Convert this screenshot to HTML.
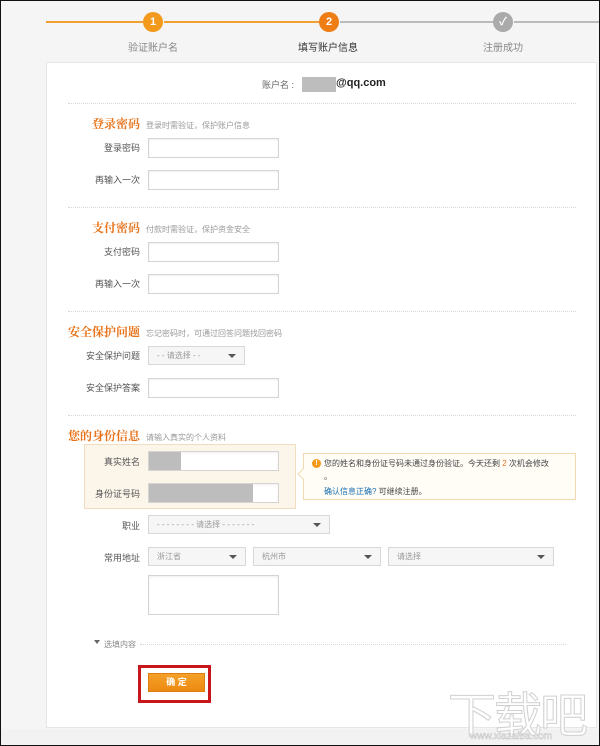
<!DOCTYPE html>
<html><head><meta charset="utf-8"><style>
*{margin:0;padding:0;box-sizing:border-box}
body{width:600px;height:746px;position:relative;overflow:hidden;background:#f5f5f5;font-family:"Liberation Sans","Noto Sans CJK SC",sans-serif;font-size:9px;color:#555}
.frame{position:absolute;left:0;top:0;width:600px;height:746px;border:1px solid #111;z-index:9;pointer-events:none}
.a{position:absolute;white-space:nowrap}
.line{position:absolute;height:2px;top:21px}
.circ{position:absolute;width:20px;height:20px;border-radius:50%;color:#fff;font-weight:bold;font-size:11px;text-align:center;line-height:20px;top:12px}
.card{position:absolute;left:46px;top:62px;width:551px;height:666px;background:#fff;border:1px solid #e6e6e6}
.dot{position:absolute;border-top:1px dotted #d8d8d8;height:0}
.h{position:absolute;color:#e8731a;font-weight:bold;font-size:12px;font-family:"Liberation Serif","Noto Serif CJK SC",serif;white-space:nowrap}
.sub{color:#999;font-size:8px;font-weight:normal;font-family:"Liberation Sans","Noto Sans CJK SC",sans-serif;margin-left:6px}
.lbl{position:absolute;width:80px;text-align:right;font-size:9px;color:#555}
.in{position:absolute;background:#fff;border:1px solid #d4d4d4;box-shadow:inset 0 1px 2px #eee}
.sel{position:absolute;background:#f6f6f6;border:1px solid #d8d8d8;font-size:8px;color:#999;padding-left:8px;line-height:17px}
.sel:after{content:"";position:absolute;right:8px;top:7px;border:4px solid transparent;border-top:4px solid #555}
.gray{position:absolute;background:#bdbdbd}
</style></head><body>
<div class="line" style="left:46px;width:97px;background:#f0a030"></div>
<div class="line" style="left:164px;width:155px;background:#f0a030"></div>
<div class="line" style="left:340px;width:153px;background:#bbb"></div>
<div class="line" style="left:514px;width:86px;background:#bbb"></div>
<div class="circ" style="left:143px;background:#f39a1c">1</div>
<div class="circ" style="left:319px;background:#ee7d14">2</div>
<div class="circ" style="left:493px;background:#aaa">✓</div>
<div class="a" style="left:128px;top:39px;color:#888;font-size:10px">验证账户名</div>
<div class="a" style="left:298px;top:39px;color:#333;font-size:10px">填写账户信息</div>
<div class="a" style="left:483px;top:39px;color:#888;font-size:10px">注册成功</div>

<div class="card"></div>
<div class="a" style="left:262px;top:78px;font-size:9px;color:#666">账户名 :</div>
<div class="gray" style="left:302px;top:77px;width:34px;height:15px"></div>
<div class="a" style="left:336px;top:77px;font-size:11px;font-weight:bold;color:#222">@qq.com</div>
<div class="dot" style="left:68px;top:103px;width:508px"></div>

<div class="h" style="left:92px;top:115px">登录密码<span class="sub">登录时需验证，保护账户信息</span></div>
<div class="lbl" style="left:60px;top:141px">登录密码</div><div class="in" style="left:148px;top:138px;width:131px;height:20px"></div>
<div class="lbl" style="left:60px;top:173px">再输入一次</div><div class="in" style="left:148px;top:170px;width:131px;height:20px"></div>
<div class="dot" style="left:68px;top:207px;width:508px"></div>

<div class="h" style="left:92px;top:219px">支付密码<span class="sub">付款时需验证，保护资金安全</span></div>
<div class="lbl" style="left:60px;top:245px">支付密码</div><div class="in" style="left:148px;top:242px;width:131px;height:20px"></div>
<div class="lbl" style="left:60px;top:277px">再输入一次</div><div class="in" style="left:148px;top:274px;width:131px;height:20px"></div>
<div class="dot" style="left:68px;top:311px;width:508px"></div>

<div class="h" style="left:68px;top:323px">安全保护问题<span class="sub">忘记密码时，可通过回答问题找回密码</span></div>
<div class="lbl" style="left:60px;top:349px">安全保护问题</div><div class="sel" style="left:148px;top:346px;width:97px;height:19px">- - 请选择 - -</div>
<div class="lbl" style="left:60px;top:381px">安全保护答案</div><div class="in" style="left:148px;top:378px;width:131px;height:20px"></div>
<div class="dot" style="left:68px;top:415px;width:508px"></div>

<div class="h" style="left:68px;top:427px">您的身份信息<span class="sub">请输入真实的个人资料</span></div>
<div class="a" style="left:84px;top:444px;width:212px;height:65px;background:#fcf5ea;border:1px solid #f0dcc0"></div>
<div class="lbl" style="left:60px;top:455px">真实姓名</div><div class="in" style="left:148px;top:451px;width:131px;height:20px"></div>
<div class="gray" style="left:149px;top:452px;width:32px;height:18px"></div>
<div class="lbl" style="left:60px;top:487px">身份证号码</div><div class="in" style="left:148px;top:483px;width:131px;height:20px"></div>
<div class="gray" style="left:149px;top:484px;width:104px;height:18px"></div>
<div class="a" style="left:303px;top:453px;width:273px;height:47px;background:#fffdf6;border:1px solid #f0d8b0"></div>
<div class="a" style="left:299px;top:470px;width:8px;height:8px;background:#fffdf6;border-left:1px solid #f0d8b0;border-bottom:1px solid #f0d8b0;transform:rotate(45deg)"></div>
<div class="a" style="left:312px;top:459px;width:9px;height:9px;border-radius:50%;background:#f39a1c;color:#fff;font-size:7px;text-align:center;line-height:9px;font-weight:bold">!</div>
<div class="a" style="left:324px;top:458px;font-size:8px;color:#444">您的姓名和身份证号码未通过身份验证。今天还剩 <span style="color:#e8731a">2</span> 次机会修改</div>
<div class="a" style="left:324px;top:471px;font-size:8px;color:#444">。</div>
<div class="a" style="left:324px;top:486px;font-size:8px;color:#444"><span style="color:#1a6fb0">确认信息正确?</span> 可继续注册。</div>

<div class="lbl" style="left:60px;top:519px">职业</div><div class="sel" style="left:148px;top:515px;width:182px;height:19px">- - - - - - - - 请选择 - - - - - - -</div>
<div class="lbl" style="left:60px;top:551px">常用地址</div>
<div class="sel" style="left:148px;top:547px;width:98px;height:19px">浙江省</div>
<div class="sel" style="left:253px;top:547px;width:128px;height:19px">杭州市</div>
<div class="sel" style="left:388px;top:547px;width:166px;height:19px">请选择</div>
<div class="in" style="left:148px;top:575px;width:131px;height:40px"></div>

<div class="a" style="left:94px;top:640px;border:3px solid transparent;border-top:4px solid #666"></div>
<div class="a" style="left:104px;top:639px;font-size:8px;color:#888">选填内容</div>
<div class="dot" style="left:140px;top:644px;width:426px"></div>

<div class="a" style="left:138px;top:665px;width:73px;height:38px;border:3px solid #c8161d"></div>
<div class="a" style="left:148px;top:673px;width:57px;height:19px;background:linear-gradient(#f5a12a,#ec8a12);border:1px solid #dd7e10;color:#fff;font-weight:bold;font-size:9px;text-align:center;line-height:17px">确 定</div>

<div class="a" style="left:0;top:729px;width:600px;height:17px;background:#f2f2f2"></div>
<div class="a" style="left:448px;top:676px;font-size:48px;color:#fff;-webkit-text-stroke:1px #d0d0d0;letter-spacing:-2px">下载吧</div>
<div class="a" style="left:470px;top:731px;font-size:10px;color:#fff;-webkit-text-stroke:0.5px #c4c4c4">www.xiazaiba.com</div>
<div class="frame"></div>
</body></html>
